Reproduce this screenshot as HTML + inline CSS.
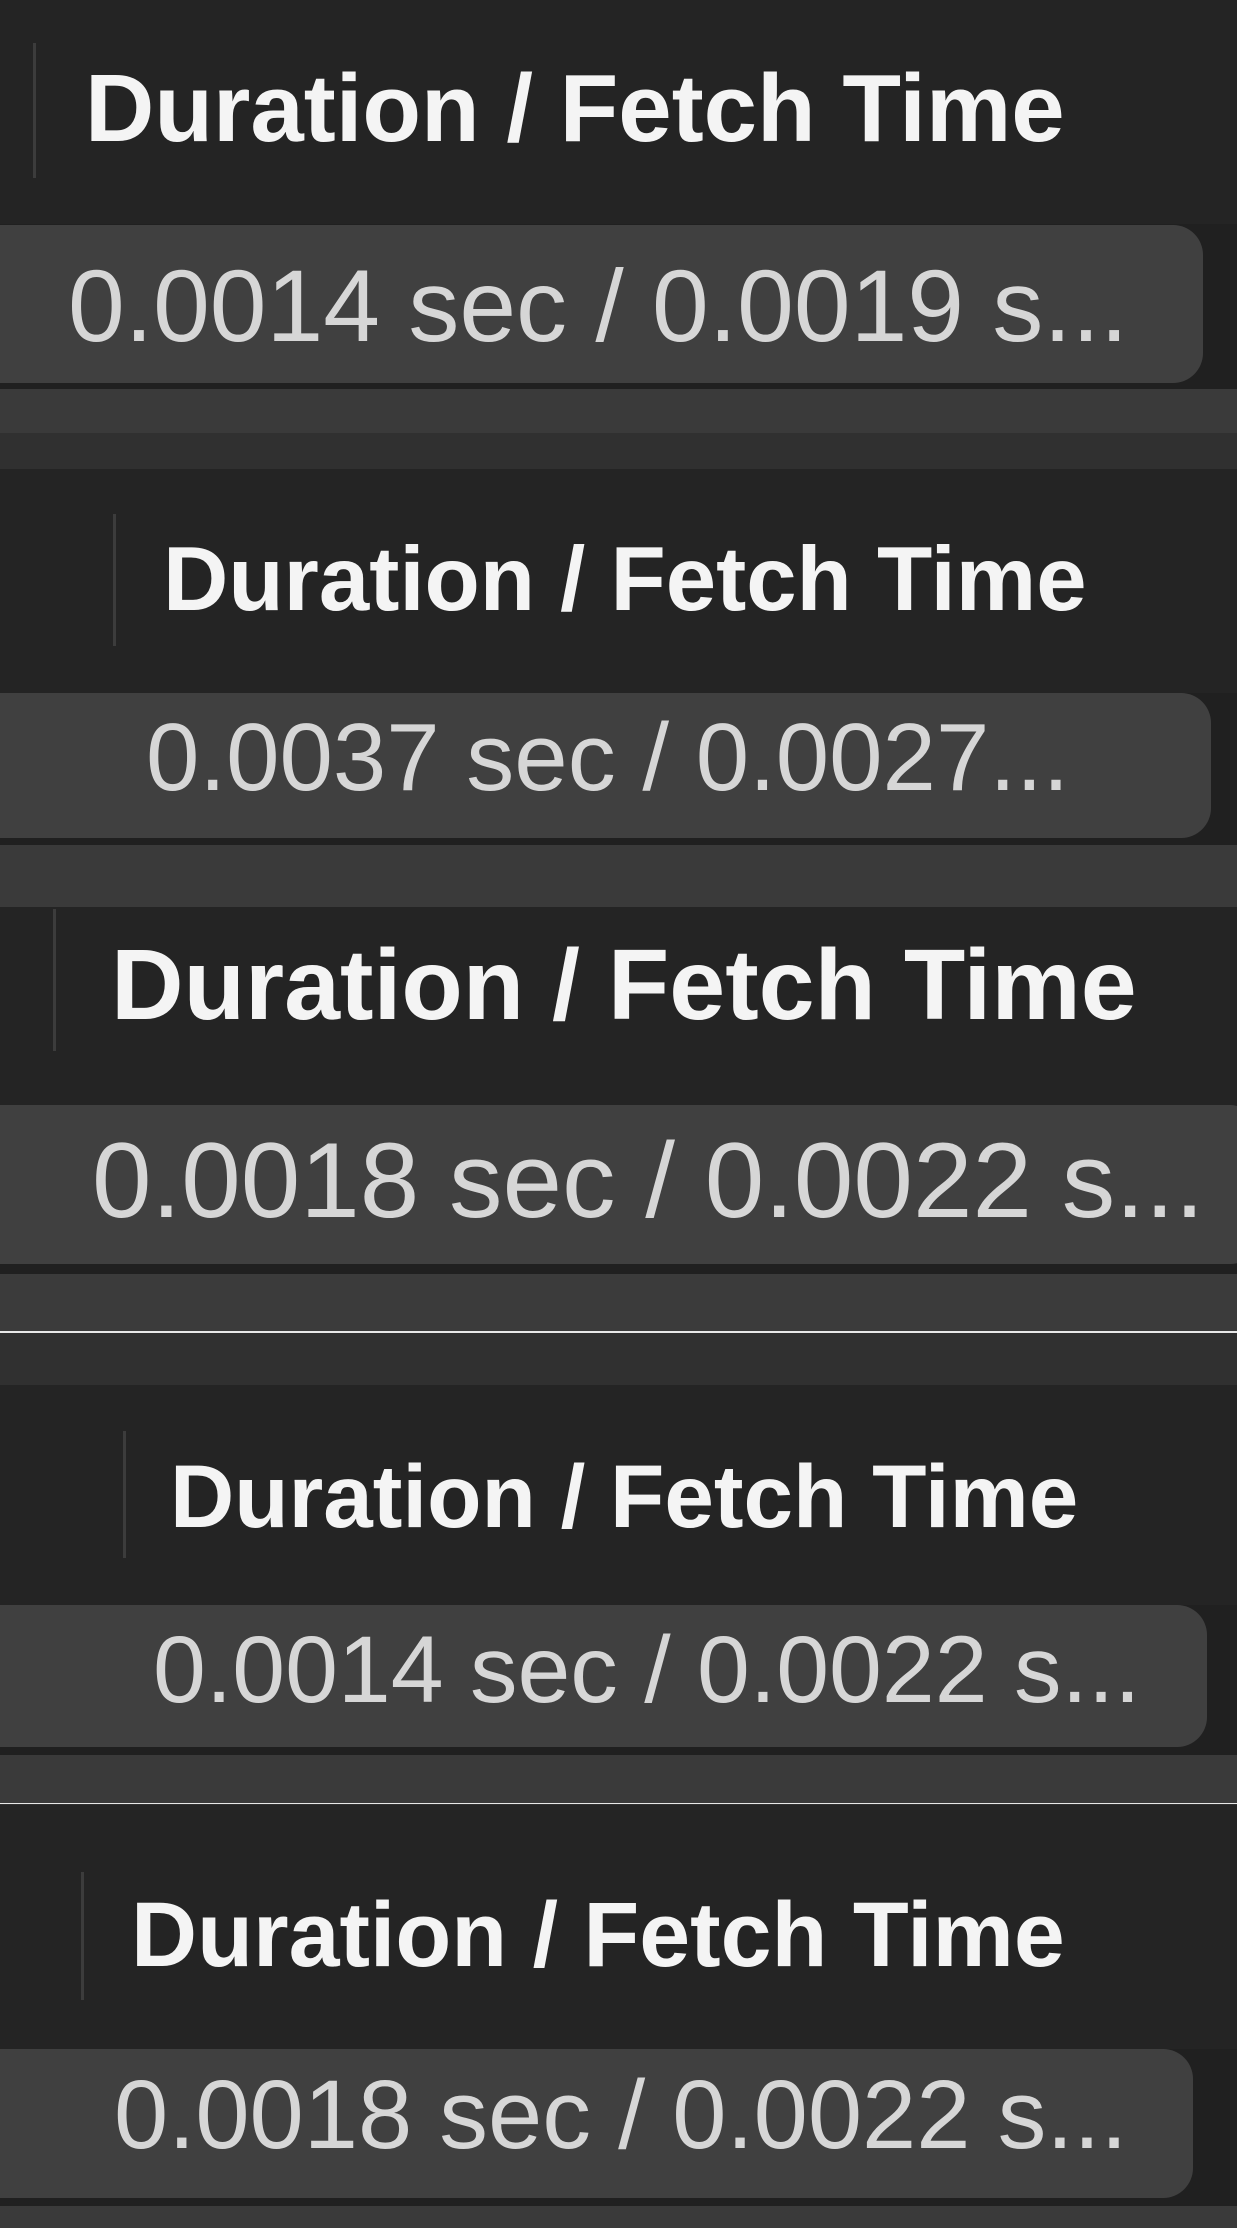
<!DOCTYPE html>
<html><head><meta charset="utf-8"><style>
html,body{margin:0;padding:0;}
body{width:1237px;height:2228px;position:relative;overflow:hidden;background:#303030;font-family:"Liberation Sans",Arial,sans-serif;}
.a{position:absolute;}
.h{position:absolute;left:0;width:1237px;background:#242424;}
.dk{position:absolute;left:0;width:1237px;background:#202020;}
.band{position:absolute;left:0;width:1237px;background:#3a3a3a;}
.pill{position:absolute;left:-40px;background:#404040;border-radius:0 30px 30px 0;}
.vl{position:absolute;width:3px;background:#3c3c3c;}
.t{position:absolute;white-space:nowrap;line-height:1;}
.ht{color:#f4f4f4;font-weight:bold;}
.vt{color:#d6d6d6;}
.wl{position:absolute;left:0;width:1237px;height:2px;background:#e8e8e8;}
</style></head><body>
<!-- section 1 -->
<div class="h" style="top:0;height:224px"></div>
<div class="dk" style="top:224px;height:165px"></div>
<div class="pill" style="top:225px;height:158px;width:1243px"></div>
<div class="band" style="top:389px;height:44px"></div>
<div class="vl" style="left:33px;top:43px;height:135px"></div>
<div class="t ht" style="left:85px;top:61px;font-size:96px">Duration / Fetch Time</div>
<div class="t vt" style="left:68px;top:255px;font-size:102px">0.0014 sec / 0.0019 s...</div>
<!-- section 2 -->
<div class="h" style="top:469px;height:224px"></div>
<div class="dk" style="top:693px;height:152px"></div>
<div class="pill" style="top:693px;height:145px;width:1251px"></div>
<div class="band" style="top:845px;height:62px"></div>
<div class="vl" style="left:113px;top:514px;height:132px"></div>
<div class="t ht" style="left:163px;top:535px;font-size:90.5px">Duration / Fetch Time</div>
<div class="t vt" style="left:146px;top:710px;font-size:96px">0.0037 sec / 0.0027...</div>
<!-- section 3 -->
<div class="h" style="top:907px;height:198px"></div>
<div class="dk" style="top:1105px;height:169px"></div>
<div class="pill" style="top:1105px;height:159px;width:1300px"></div>
<div class="band" style="top:1274px;height:57px;background:#3b3b3b"></div>
<div class="wl" style="top:1331px"></div>
<div class="vl" style="left:53px;top:909px;height:142px"></div>
<div class="t ht" style="left:111px;top:935px;font-size:100.5px">Duration / Fetch Time</div>
<div class="t vt" style="left:92px;top:1127px;font-size:107px">0.0018 sec / 0.0022 s...</div>
<!-- section 4 -->
<div class="a" style="left:0;top:1333px;width:1237px;height:52px;background:#303030"></div>
<div class="h" style="top:1385px;height:220px"></div>
<div class="dk" style="top:1605px;height:150px"></div>
<div class="pill" style="top:1605px;height:142px;width:1247px"></div>
<div class="band" style="top:1755px;height:48px"></div>
<div class="wl" style="top:1803px;height:1px"></div>
<div class="vl" style="left:123px;top:1431px;height:127px"></div>
<div class="t ht" style="left:170px;top:1452px;font-size:89px">Duration / Fetch Time</div>
<div class="t vt" style="left:153px;top:1623px;font-size:95px">0.0014 sec / 0.0022 s...</div>
<!-- section 5 -->
<div class="h" style="top:1805px;height:244px"></div>
<div class="dk" style="top:2049px;height:160px"></div>
<div class="pill" style="top:2049px;height:149px;width:1233px"></div>
<div class="band" style="top:2206px;height:22px"></div>
<div class="vl" style="left:81px;top:1872px;height:128px"></div>
<div class="t ht" style="left:131px;top:1890px;font-size:91.5px">Duration / Fetch Time</div>
<div class="t vt" style="left:114px;top:2066px;font-size:97.5px">0.0018 sec / 0.0022 s...</div>
</body></html>
